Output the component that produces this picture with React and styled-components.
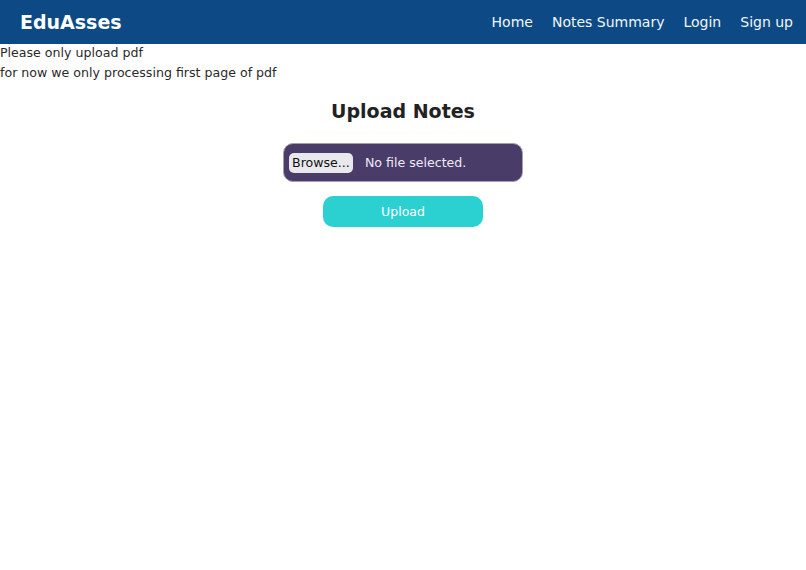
import React from 'react';
import styled, { createGlobalStyle } from 'styled-components';

const Global = createGlobalStyle`
  body {
    margin: 0;
    font-family: "DejaVu Sans", "Liberation Sans", sans-serif;
    color: #212529;
    background: #fff;
  }
`;

const Navbar = styled.nav`
  height: 44px;
  background: #0d4a85;
  display: flex;
  align-items: center;
  justify-content: space-between;
  padding: 0 13px 0 20px;
`;

const Brand = styled.a`
  color: #fff;
  font-size: 19px;
  font-weight: bold;
  text-decoration: none;
`;

const NavLinks = styled.div`
  display: flex;
  gap: 19px;
`;

const NavLink = styled.a`
  color: #f2f5f9;
  font-size: 14px;
  text-decoration: none;
`;

const Notes = styled.div`
  display: flex;
  flex-direction: column;
  gap: 4px;
  padding-top: 1px;
`;

const Note = styled.p`
  margin: 0;
  font-size: 12.6px;
  line-height: 16px;
  color: #2a2a2a;
`;

const UploadSection = styled.section`
  display: flex;
  flex-direction: column;
  align-items: center;
  padding-top: 18px;
`;

const Title = styled.h2`
  margin: 0 0 20px;
  font-size: 19px;
  line-height: 24px;
  color: #222;
`;

const FileBox = styled.label`
  width: 240px;
  height: 39px;
  box-sizing: border-box;
  background: #4a3c69;
  border: 1px solid #a49cb8;
  border-radius: 10px;
  display: flex;
  align-items: center;
  padding: 0 5px;
  gap: 12px;
  font-size: 12.6px;
  color: #eeeaf5;
`;

const BrowseButton = styled.span`
  background: #e9e9ed;
  color: #111;
  border-radius: 5px;
  padding: 0 3px;
  height: 20px;
  line-height: 20px;
`;

const UploadButton = styled.button`
  margin-top: 14px;
  width: 160px;
  height: 31px;
  border: none;
  border-radius: 10px;
  background: #2bd1d1;
  color: #fff;
  font-family: inherit;
  font-size: 12.5px;
`;

export default function App() {
  return (
    <>
      <Global />
      <Navbar>
        <Brand href="#">EduAsses</Brand>
        <NavLinks>
          <NavLink href="#">Home</NavLink>
          <NavLink href="#">Notes Summary</NavLink>
          <NavLink href="#">Login</NavLink>
          <NavLink href="#">Sign up</NavLink>
        </NavLinks>
      </Navbar>
      <Notes>
        <Note>Please only upload pdf</Note>
        <Note>for now we only processing first page of pdf</Note>
      </Notes>
      <UploadSection>
        <Title>Upload Notes</Title>
        <FileBox>
          <BrowseButton>Browse...</BrowseButton>
          <span>No file selected.</span>
        </FileBox>
        <UploadButton>Upload</UploadButton>
      </UploadSection>
    </>
  );
}
